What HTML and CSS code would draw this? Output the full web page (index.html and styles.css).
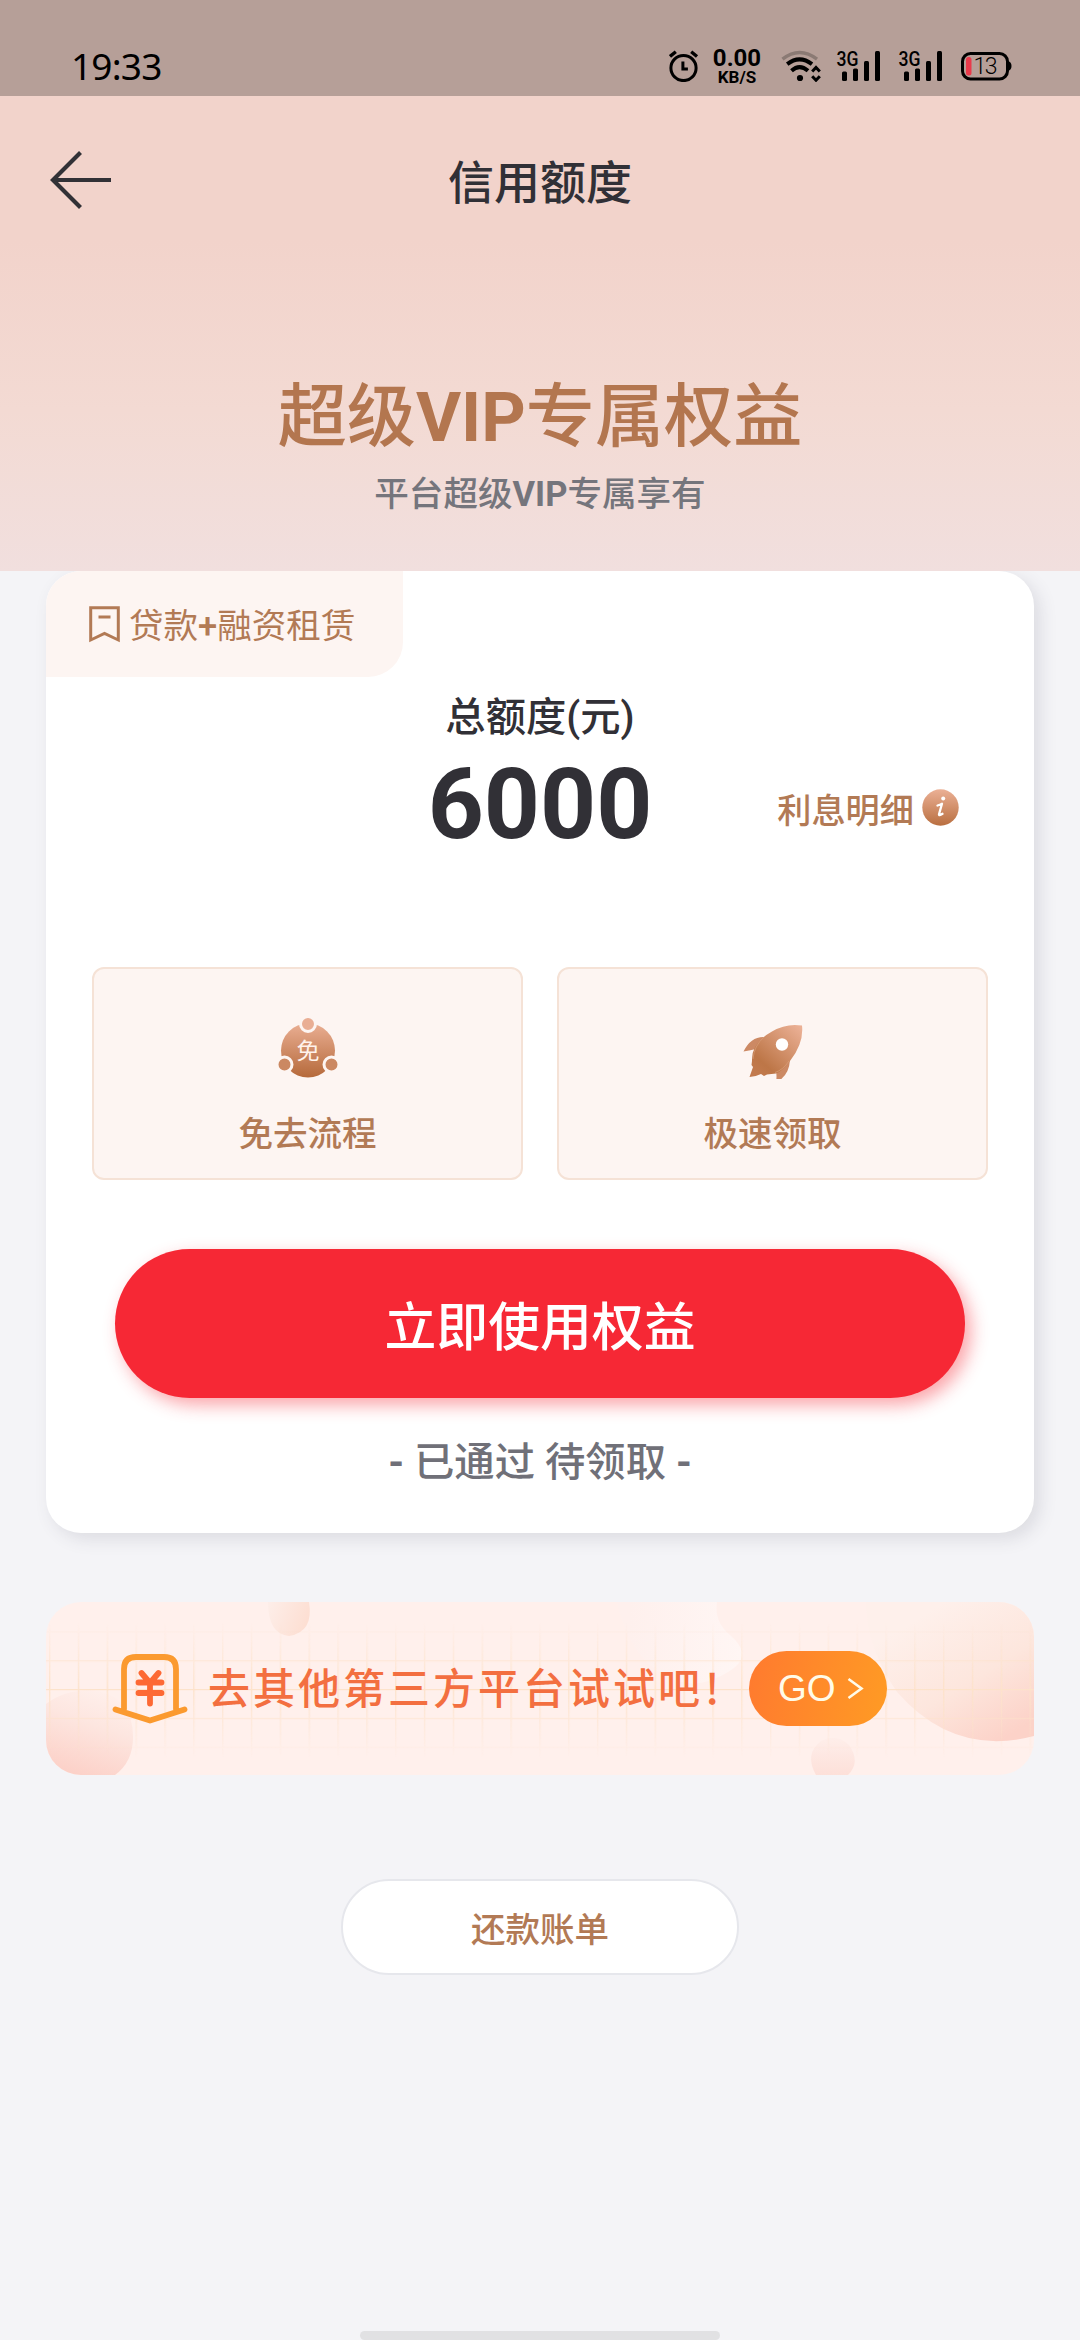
FILE: index.html
```html
<!DOCTYPE html>
<html lang="zh-CN">
<head>
<meta charset="utf-8">
<title>信用额度</title>
<link rel="stylesheet" href="styles.css">
</head>
<body>
<main class="page">
  <header class="hero">
    <div class="status">
      <span class="clock">19:33</span>
      <div class="tray">
        <svg class="alarm" width="30" height="32" viewBox="0 0 30 32" fill="none" stroke="#000">
          <circle cx="14.5" cy="18" r="12.6" stroke-width="3"/>
          <path d="M13.9 11.5v7.4h5" stroke-width="3"/>
          <path d="M1 6.5 6.8 1.8M28 6.5 22.2 1.8" stroke-width="3.4"/>
        </svg>
        <div class="speed"><b>0.00</b><small>KB/S</small></div>
        <svg class="wifi" width="40" height="32" viewBox="0 0 40 32" fill="none" stroke="#000">
          <path d="M1.5 9.2Q18.5-4.2 36 9.2" stroke="#8b7a74" stroke-width="3.4"/>
          <path d="M6.2 14.2Q18.5 4.6 31 14.2" stroke-width="4"/>
          <path d="M10.5 20.8Q18.5 13.4 27 20.8" stroke-width="4"/>
          <circle cx="19" cy="28" r="3.1" fill="#000" stroke="none"/>
          <path d="M31.2 21.5 35 17.5 38.8 21.5M31.2 26.2 35 30.2 38.8 26.2" stroke-width="3"/>
        </svg>
        <svg class="signal" width="45" height="32" viewBox="0 0 45 32">
          <text x="0.5" y="15.5" textLength="22" lengthAdjust="spacingAndGlyphs">3G</text>
          <rect x="6" y="21.5" width="5" height="9.5" rx="1.5"/><rect x="17" y="18.5" width="5" height="12.5" rx="1.5"/><rect x="28" y="11" width="5" height="20" rx="1.5"/><rect x="39" y="1" width="5" height="30" rx="1.5"/>
        </svg>
        <svg class="signal second" width="45" height="32" viewBox="0 0 45 32">
          <text x="0.5" y="15.5" textLength="22" lengthAdjust="spacingAndGlyphs">3G</text>
          <rect x="6" y="21.5" width="5" height="9.5" rx="1.5"/><rect x="17" y="18.5" width="5" height="12.5" rx="1.5"/><rect x="28" y="11" width="5" height="20" rx="1.5"/><rect x="39" y="1" width="5" height="30" rx="1.5"/>
        </svg>
        <svg class="battery" width="51" height="32" viewBox="0 0 51 32">
          <rect x="1.5" y="3.5" width="45" height="25.5" rx="8" fill="none" stroke="#000" stroke-width="3"/>
          <path d="M47 11q3.500 1 3.500 5t-3.500 5z"/>
          <rect x="5" y="7" width="5.5" height="18.5" rx="2.5" fill="#e93a4b"/>
          <text x="12.5" y="24" textLength="24">13</text>
        </svg>
      </div>
    </div>
    <nav class="nav">
      <svg class="back" width="62" height="60" viewBox="0 0 62 60" fill="none" stroke="#323136" stroke-width="4.2">
        <path d="M30.5 2.5 3 30 30.5 57.500M3 30H61"/>
      </svg>
      <h1 class="nav-title">信用额度</h1>
    </nav>
    <h2 class="headline">超级<b>VIP</b>专属权益</h2>
    <p class="subline">平台超级<b>VIP</b>专属享有</p>
  </header>

  <section class="card">
    <div class="tag">
      <svg width="31" height="37" viewBox="0 0 31 37" fill="none" stroke="#b27a55" stroke-width="3">
        <path d="M1.7 1.7H29.3V34L15.5 27.5 1.7 34ZM9.5 11H21.5"/>
      </svg>
      <span>贷款<b>+</b>融资租赁</span>
    </div>
    <p class="label">总额度(元)</p>
    <div class="amount-row">
      <strong class="amount">6000</strong>
      <a class="interest">利息明细
        <svg width="37" height="37" viewBox="0 0 37 37">
          <defs><linearGradient id="copper" x1="0" y1="0" x2="0" y2="1"><stop offset="0" stop-color="#ebb095"/><stop offset="1" stop-color="#b96f40"/></linearGradient></defs>
          <circle cx="18.5" cy="18.5" r="18.2" fill="url(#copper)"/>
          <circle cx="21.2" cy="9.5" r="2" fill="#fff"/>
          <path d="M15.5 16.500Q18 15.800 20 14.700L17 25.200Q16.800 27.200 20.500 24.800" fill="none" stroke="#fff" stroke-width="2.300" stroke-linejoin="round" stroke-linecap="round"/>
        </svg>
      </a>
    </div>
    <div class="perks">
      <div class="perk">
        <svg width="60" height="62" viewBox="0 0 60 62">
          <defs><linearGradient id="badge" gradientUnits="userSpaceOnUse" x1="0" y1="5" x2="0" y2="61"><stop offset="0" stop-color="#ebb095"/><stop offset="1" stop-color="#b5693a"/></linearGradient></defs>
          <circle cx="30" cy="33.5" r="27" fill="url(#badge)"/>
          <g stroke="#fdf5f2" stroke-width="3"><circle cx="30" cy="7" r="7.5" fill="#e9ae94"/><circle cx="6.5" cy="47.5" r="7.5" fill="#cb8862"/><circle cx="53.5" cy="47.5" r="7.5" fill="#cb8862"/></g>
          <text class="badge-text" x="30" y="42" text-anchor="middle">免</text>
        </svg>
        <span>免去流程</span>
      </div>
      <div class="perk">
        <svg width="60" height="62" viewBox="0 0 60 62">
          <defs><linearGradient id="rocket" gradientUnits="userSpaceOnUse" x1="55" y1="8" x2="12" y2="56"><stop offset="0" stop-color="#ebb095"/><stop offset=".8" stop-color="#bd7647"/><stop offset="1" stop-color="#c27a4e"/></linearGradient></defs>
          <path d="M.5 34.500Q8 19 22 20L13 32Q8 33 .5 34.500ZM33 65.500Q46 59 47 43L33 54.500Q34 59 33 65.500Z" fill="#cc8964"/>
          <path d="M59 8.500Q43 6 29 14.500Q8 26 9 44L8.500 48 10 50 6.500 60Q12 60 18 57L21 59 24 57.500 33 56.500Q40 54 47 44Q61 26 59 8.500Z" fill="url(#rocket)"/>
          <path d="M21 20Q11 29 10 42M32 55.500Q40 53 46 44" fill="none" stroke="#dca37f" stroke-width="1" opacity=".6"/>
          <circle cx="39" cy="27.5" r="6.2" fill="#fff"/>
        </svg>
        <span>极速领取</span>
      </div>
    </div>
    <button class="primary">立即使用权益</button>
    <p class="state"><b>-</b> 已通过 待领取 <b>-</b></p>
  </section>

  <section class="banner">
    <svg class="banner-art" width="988" height="173" viewBox="0 0 988 173">
      <defs>
        <linearGradient id="b1" x1=".7" y1="0" x2=".35" y2="1"><stop offset="0" stop-color="#fff0ec"/><stop offset=".4" stop-color="#fde6e0"/><stop offset="1" stop-color="#fcd1c8"/></linearGradient>
        <linearGradient id="b2" x1="0" y1="0" x2="1" y2=".3"><stop offset="0" stop-color="#fdeee9"/><stop offset="1" stop-color="#fddfd3"/></linearGradient>
        <linearGradient id="b3" x1=".2" y1=".2" x2=".8" y2="1"><stop offset="0" stop-color="#fef0eb"/><stop offset=".55" stop-color="#fde6dd"/><stop offset="1" stop-color="#fcd2c8"/></linearGradient>
        <linearGradient id="b4" x1="0" y1="0" x2="1" y2="0"><stop offset=".1" stop-color="#fef0ed"/><stop offset="1" stop-color="#fff6f4"/></linearGradient>
        <linearGradient id="b5" x1="0" y1="0" x2="0" y2="1"><stop offset="0" stop-color="#feeeea"/><stop offset="1" stop-color="#fde0d9"/></linearGradient>
        <linearGradient id="fade" x1="0" y1="0" x2="0" y2="1"><stop offset=".12" stop-color="#fff" stop-opacity="0"/><stop offset=".5" stop-color="#fff"/><stop offset=".9" stop-color="#fff" stop-opacity="0"/></linearGradient>
        <mask id="gridfade"><rect width="988" height="173" fill="url(#fade)"/></mask>
        <pattern id="grid" width="28.84" height="28.84" patternUnits="userSpaceOnUse" x="3" y="0.5"><path d="M.7 0V29M0 .7H29" stroke="#fde2ca" stroke-width="1.3"/></pattern>
      </defs>
      <path d="M0 102Q18 88 45 88Q87 92 87 135Q87 160 69 173H0Z" fill="url(#b1)"/>
      <path d="M222 0H263Q268 30 243 34Q222 32 222 0Z" fill="url(#b2)"/>
      <path d="M571 0H671Q668 20 684 33Q706 52 688 66Q660 86 635 80Q585 65 571 0Z" fill="url(#b4)"/>
      <path d="M820 0H988V134Q908 155 851 90Q820 45 820 0Z" fill="url(#b3)"/>
      <path d="M770 173Q758 152 775 139Q790 131 803 143Q815 160 802 173Z" fill="url(#b5)"/>
      <rect width="988" height="173" fill="url(#grid)" mask="url(#gridfade)"/>
    </svg>
    <div class="banner-row">
      <svg width="76" height="70" viewBox="0 0 76 70" fill="none" stroke-linecap="round" stroke-linejoin="round">
        <path d="M12 55V15Q12 3 24 3H52Q64 3 64 15V55M3.5 55.5 38 66.5 72.5 55.5" stroke="#fb9a2f" stroke-width="5.8"/>
        <path d="M29.5 19 38 29 46.5 19M26.5 28.5H49.5M26.5 39H49.5M38 29V49.5" stroke="#fd6934" stroke-width="5.8"/>
      </svg>
      <span class="banner-text">去其他第三方平台试试吧<span class="bang">!</span></span>
      <a class="go">GO
        <svg width="17" height="24" viewBox="0 0 17 24" fill="none" stroke="#fffbe8" stroke-width="2.6"><path d="M1.5 2 14.5 11.5 1.5 21"/></svg>
      </a>
    </div>
  </section>

  <button class="bill">还款账单</button>
  <div class="home-bar"></div>
</main>
</body>
</html>
```
FILE: styles.css
```css
* { box-sizing: border-box; margin: 0; padding: 0; }

body {
  width: 1080px;
  background: #f4f4f7;
  font-family: Roboto, "Noto Sans CJK SC", sans-serif;
  color: #313036;
}

.page {
  display: flex;
  flex-direction: column;
  align-items: center;
  height: 2340px;
  overflow: hidden;
}

svg { display: block; flex: none; }

.hero {
  width: 100%;
  height: 571px;
  background: linear-gradient(#f2d3cb 0, #f2d3cb 240px, #f3dad3 410px, #f1dfde 571px);
  text-align: center;
}

.status {
  display: flex;
  justify-content: space-between;
  align-items: flex-start;
  height: 96px;
  padding: 50px 68px 0 71px;
  background: #b69f98;
  color: #000;
}

.clock {
  font: 400 37px/32px "Noto Sans", sans-serif;
  letter-spacing: -0.8px;
}

.tray { display: flex; }

.speed {
  display: flex;
  flex-direction: column;
  align-items: center;
  width: 48px;
  margin: -2px 20px 0 14px;
}
.speed b { font: 700 24px/21px Roboto, sans-serif; }
.speed small { font: 700 17px/17px Roboto, sans-serif; }

.signal { margin-left: 15px; overflow: visible; }
.signal.second { margin-left: 17px; }
.signal text { font: 500 19.500px Roboto, sans-serif; }
.battery { margin-left: 18px; }
.battery text { font: 300 23px Roboto, sans-serif; }

.nav {
  display: grid;
  grid-template-columns: 1fr auto 1fr;
  align-items: center;
  height: 174px;
  padding: 0 50px;
}
.back { margin-top: -6px; }
.nav-title { font-size: 46px; font-weight: 500; line-height: 60px; }

.headline {
  margin-top: 108px;
  font-size: 69.120px;
  font-weight: 500;
  line-height: 80px;
  color: #b3764f;
}

.subline {
  margin-top: 12px;
  font-size: 34.560px;
  font-weight: 500;
  line-height: 48px;
  color: #75757c;
}

.card {
  width: 988px;
  height: 962px;
  border-radius: 35px;
  background: #fff;
  box-shadow: 6px 6px 17px rgba(60, 60, 85, .13);
  text-align: center;
  clip-path: inset(0 -40px -40px -40px);
}

.tag {
  display: flex;
  align-items: center;
  gap: 9px;
  width: 357px;
  height: 106px;
  padding-left: 43px;
  border-radius: 35px 0;
  background: #fdf5f2;
  color: #b27a55;
  font-size: 34.560px;
  line-height: 48px;
}
.tag span { margin-top: 3px; }
.tag b { font-weight: 500; }

.label {
  margin-top: 17px;
  font-size: 40.320px;
  font-weight: 500;
  line-height: 48px;
}

.amount-row {
  display: grid;
  grid-template-columns: 1fr auto 1fr;
  height: 100px;
  margin-top: 13px;
  padding: 0 75px;
}
.amount {
  grid-column: 2;
  font-size: 97.920px;
  font-weight: 700;
  line-height: 100px;
}
.interest {
  display: flex;
  align-items: center;
  justify-content: flex-end;
  gap: 8px;
  padding-top: 5px;
  font-size: 34.200px;
  font-weight: 500;
  color: #b27a55;
}

.perks {
  display: grid;
  grid-template-columns: 1fr 1fr;
  gap: 34px;
  margin-top: 112px;
  padding: 0 46px;
}
.perk {
  display: flex;
  flex-direction: column;
  align-items: center;
  gap: 31px;
  height: 213px;
  padding-top: 48px;
  border: 2px solid #f5e2d6;
  border-radius: 12px;
  background: #fdf5f2;
  color: #b27a55;
  font-size: 34.560px;
  font-weight: 500;
  line-height: 48px;
}
.badge-text { font: 400 23px "Noto Sans CJK SC", sans-serif; fill: #fff3ec; }

button { border: 0; font-family: inherit; }

.primary {
  width: 850px;
  height: 149px;
  margin-top: 69px;
  padding-bottom: 1px;
  border-radius: 75px;
  background: #f62835;
  box-shadow: 6px 7px 17px rgba(246, 40, 53, .42);
  color: #fff;
  font-size: 51.840px;
  font-weight: 500;
}

.state {
  margin-top: 41px;
  font-size: 40.320px;
  font-weight: 500;
  line-height: 48px;
  color: #707078;
}

.banner {
  position: relative;
  width: 988px;
  height: 173px;
  margin-top: 69px;
  border-radius: 35px;
  background: #fff0ec;
  overflow: hidden;
}
.banner-art { position: absolute; inset: 0; }
.banner-row {
  position: relative;
  display: flex;
  align-items: center;
  height: 173px;
  padding-left: 66px;
}
.banner-text {
  width: 518px;
  margin: -5px 23px 0 20px;
  color: #f36f40;
  font: 500 42px/60px "Noto Sans CJK SC", sans-serif;
  letter-spacing: 3px;
  white-space: nowrap;
}
.bang { margin-left: 2px; }
.go {
  display: flex;
  align-items: center;
  gap: 11px;
  width: 138px;
  height: 75px;
  padding-left: 29px;
  border-radius: 38px;
  background: linear-gradient(100deg, #ff7a2f, #ff9b24);
  color: #fffbe8;
  font: 400 37px/75px "Liberation Sans", Arial, sans-serif;
}

.bill {
  width: 398px;
  height: 96px;
  margin-top: 104px;
  padding-bottom: 1px;
  border: 2px solid #e6e7ec;
  border-radius: 48px;
  background: #fff;
  color: #b27a55;
  font-size: 34.560px;
  font-weight: 500;
}

.home-bar {
  width: 360px;
  height: 9px;
  margin-top: auto;
  border-radius: 5px;
  background: #e1e1e3;
}
```
